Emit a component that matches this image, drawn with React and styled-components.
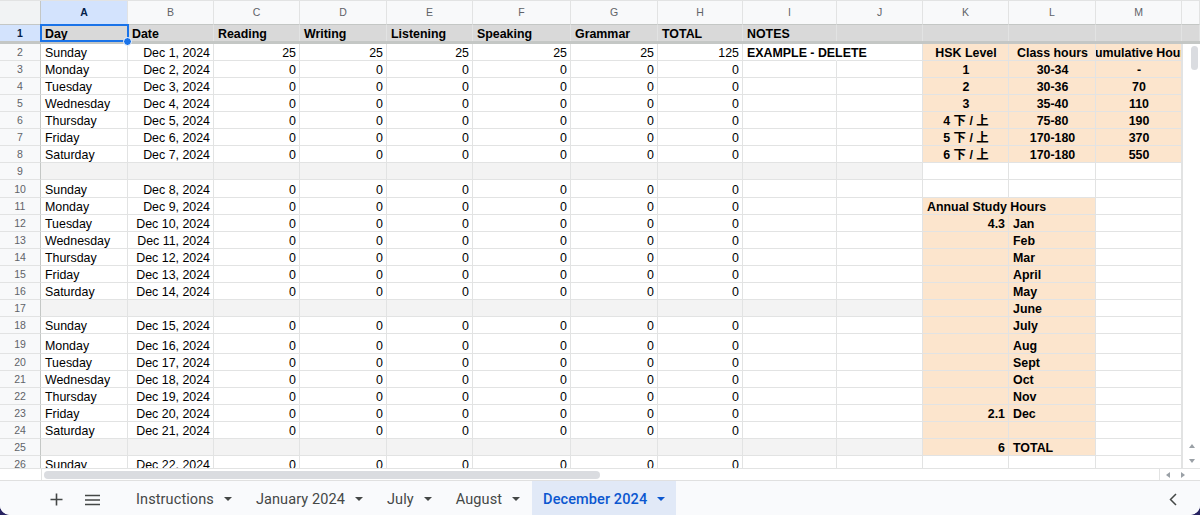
import React from 'react';
import styled, { createGlobalStyle } from 'styled-components';

const COLS = [41, 87, 86, 86, 87, 86, 98, 87, 85, 94, 86, 86, 87, 86];
const LETTERS = 'ABCDEFGHIJKLM'.split('');
const GRID = COLS.map((w) => w + 'px').join(' ');
const LINE = '#e2e3e3';
const PEACH = '#fce5cd';
const SEP = '#f3f3f3';
const HEAD_GRAY = '#d9d9d9';

const GlobalStyle = createGlobalStyle`
  html, body { margin: 0; padding: 0; background: #272361; }
  body { font-family: "Liberation Sans", Arial, "Noto Sans CJK SC", sans-serif; }
  * { box-sizing: border-box; }
`;

const Window = styled.div`
  width: 1200px;
  height: 515px;
  background: #fff;
  border-radius: 0 0 10px 10px;
  overflow: hidden;
  display: flex;
  flex-direction: column;
`;

const HeaderRow = styled.div`
  display: grid;
  grid-template-columns: ${GRID} 18px;
  height: 25px;
  border-top: 1px solid ${LINE};
`;

const Corner = styled.div`
  background: #f1f3f4;
  border-right: 1px solid #c4c7c5;
  border-bottom: 1px solid #c4c7c5;
`;

const ColHead = styled.div`
  display: flex;
  align-items: center;
  justify-content: center;
  padding-bottom: 1px;
  font-size: 10.5px;
  color: ${(p) => (p.$active ? '#041e49' : '#5f6368')};
  font-weight: ${(p) => (p.$active ? 700 : 400)};
  background: ${(p) => (p.$active ? '#d3e3fd' : '#f8f9fa')};
  border-right: 1px solid ${LINE};
  border-bottom: 1px solid #c4c7c5;
`;

const FrozenBlock = styled.div`
  position: relative;
`;

const Row = styled.div`
  display: grid;
  grid-template-columns: ${(p) => (p.$wide ? GRID + ' 18px' : GRID)};
  height: ${(p) => p.$h}px;
  flex-shrink: 0;
`;

const RowNum = styled.div`
  display: flex;
  align-items: center;
  justify-content: center;
  font-size: 10.5px;
  color: ${(p) => (p.$active ? '#041e49' : '#5f6368')};
  font-weight: ${(p) => (p.$active ? 700 : 400)};
  background: ${(p) => (p.$active ? '#d3e3fd' : '#f8f9fa')};
  border-right: 1px solid #c4c7c5;
  border-bottom: ${(p) => (p.$noBottom ? 'none' : `1px solid ${LINE}`)};
`;

const Cell = styled.div`
  display: flex;
  align-items: flex-end;
  justify-content: ${(p) =>
    p.$align === 'right' ? 'flex-end' : p.$align === 'center' ? 'center' : 'flex-start'};
  padding: 0 3px 0 4px;
  background: ${(p) => p.$bg || '#fff'};
  border-right: 1px solid ${(p) => (p.$noRight ? 'transparent' : LINE)};
  border-bottom: ${(p) => (p.$noBottom ? 'none' : `1px solid ${LINE}`)};
  font-size: 12.4px;
  line-height: 13px;
  color: #000;
  font-weight: ${(p) => (p.$bold ? 700 : 400)};
  white-space: nowrap;
  overflow: ${(p) => (p.$spill ? 'visible' : 'hidden')};
  position: ${(p) => (p.$spill ? 'relative' : 'static')};
  z-index: ${(p) => (p.$spill ? 1 : 'auto')};
`;

const Freeze = styled.div`
  height: 3px;
  background: #c4c7c5;
`;

const Selection = styled.div`
  position: absolute;
  left: 40px;
  top: -1px;
  width: 89px;
  height: 18px;
  border: 2px solid #1a73e8;
  pointer-events: none;
  z-index: 3;
`;

const Handle = styled.div`
  position: absolute;
  left: 123px;
  top: 12px;
  width: 9px;
  height: 9px;
  border-radius: 50%;
  background: #1a73e8;
  border: 1px solid #fff;
  z-index: 4;
`;

const Body = styled.div`
  display: flex;
  height: 424px;
  flex-shrink: 0;
`;

const BodyGrid = styled.div`
  width: 1182px;
  height: 424px;
  overflow: hidden;
  display: flex;
  flex-direction: column;
`;

const VScroll = styled.div`
  width: 18px;
  height: 424px;
  border-left: 1px solid ${LINE};
  display: flex;
  flex-direction: column;
  background: #fff;
`;

const VThumb = styled.div`
  margin: 2px 0 0 8px;
  width: 7px;
  height: 24px;
  border-radius: 4px;
  background: #dadce0;
`;

const Spacer = styled.div`
  flex: 1;
`;

const ArrowBox = styled.div`
  width: ${(p) => p.$w || 17}px;
  height: ${(p) => p.$h || 15}px;
  display: flex;
  align-items: center;
  justify-content: center;
  color: #9aa0a6;
`;

const ScrollRow = styled.div`
  height: 13px;
  display: flex;
  border-top: 1px solid ${LINE};
  border-bottom: 1px solid #e0e0e0;
  flex-shrink: 0;
  background: #fff;
`;

const ScrollStub = styled.div`
  width: 42px;
  border-right: 1px solid ${LINE};
`;

const HTrack = styled.div`
  flex: 1;
  display: flex;
  align-items: center;
`;

const HThumb = styled.div`
  margin-left: 2px;
  width: 556px;
  height: 8px;
  border-radius: 4px;
  background: #dadce0;
`;

const HArrows = styled.div`
  display: flex;
  margin-right: 10px;
  border-left: 1px solid ${LINE};
`;

const TabBar = styled.div`
  flex: 1;
  display: flex;
  align-items: stretch;
  background: #f9fafc;
  padding-left: 38px;
  font-family: Roboto, "Liberation Sans", Arial, sans-serif;
`;

const IconBtn = styled.div`
  width: 36px;
  display: flex;
  align-items: center;
  justify-content: center;
  padding-top: 3px;
  color: #444746;
`;

const Tabs = styled.div`
  display: flex;
  align-items: stretch;
  gap: 2px;
  margin-left: 15px;
`;

const Tab = styled.div`
  display: flex;
  align-items: center;
  gap: 10px;
  padding: 2px 11px 0;
  margin-left: ${(p) => (p.$active ? '-1px' : '0')};
  font-size: 14.5px;
  letter-spacing: 0.1px;
  color: ${(p) => (p.$active ? '#0b57d0' : '#444746')};
  background: ${(p) => (p.$active ? '#e1e9f7' : 'transparent')};
  font-weight: ${(p) => (p.$active ? 500 : 400)};
`;

const RightChevron = styled.div`
  margin-left: auto;
  margin-right: 2px;
  width: 50px;
  display: flex;
  align-items: center;
  justify-content: center;
  padding-top: 2px;
  color: #444746;
`;

const Caret = () => (
  <svg width="8" height="4" viewBox="0 0 8 4">
    <path d="M0 0h8L4 4z" fill="currentColor" />
  </svg>
);

const Tri = ({ dir }) => {
  const d = {
    up: 'M0 4L3 0L6 4z',
    down: 'M0 0h6L3 4z',
    left: 'M4 0v6L0 3z',
    right: 'M0 0v6L4 3z',
  }[dir];
  const w = dir === 'up' || dir === 'down' ? 6 : 4;
  const h = dir === 'up' || dir === 'down' ? 4 : 6;
  return (
    <svg width={w} height={h} viewBox={`0 0 ${w} ${h}`}>
      <path d={d} fill="currentColor" />
    </svg>
  );
};

const DAYS = ['Sunday', 'Monday', 'Tuesday', 'Wednesday', 'Thursday', 'Friday', 'Saturday'];
const HEADERS = ['Day', 'Date', 'Reading', 'Writing', 'Listening', 'Speaking', 'Grammar', 'TOTAL', 'NOTES', '', '', '', ''];
const HSK = [
  ['HSK Level', 'Class hours', 'Cumulative Hours'],
  ['1', '30-34', '-'],
  ['2', '30-36', '70'],
  ['3', '35-40', '110'],
  ['4 下 / 上', '75-80', '190'],
  ['5 下 / 上', '170-180', '370'],
  ['6 下 / 上', '170-180', '550'],
];
const MONTHS = ['Jan', 'Feb', 'Mar', 'April', 'May', 'June', 'July', 'Aug', 'Sept', 'Oct', 'Nov', 'Dec', '', 'TOTAL'];
const KVALS = { 12: '4.3', 23: '2.1', 25: '6' };

function buildRows() {
  const rows = [];
  for (let r = 2; r <= 26; r++) {
    const cells = Array.from({ length: 13 }, () => ({}));
    const sep = r === 9 || r === 17 || r === 25;
    if (sep) {
      for (let c = 0; c < 10; c++) cells[c].bg = SEP;
    } else {
      const d = r < 9 ? r - 1 : r < 17 ? r - 2 : r < 25 ? r - 3 : r - 4;
      cells[0] = { t: DAYS[(d - 1) % 7] };
      cells[1] = { t: `Dec ${d}, 2024`, align: 'right' };
      for (let c = 2; c <= 7; c++) {
        cells[c] = { t: r === 2 ? (c === 7 ? '125' : '25') : '0', align: 'right' };
      }
      if (r === 2) cells[8] = { t: 'EXAMPLE - DELETE', bold: true, spill: true, noRight: true };
    }
    if (r >= 2 && r <= 8) {
      HSK[r - 2].forEach((t, i) => {
        cells[10 + i] = { t, bg: PEACH, bold: true, align: 'center' };
      });
    }
    if (r >= 11 && r <= 25) {
      if (r === 11) {
        cells[10] = { t: 'Annual Study Hours', bg: PEACH, bold: true, spill: true, noRight: true };
        cells[11] = { bg: PEACH };
      } else {
        cells[10] = { t: KVALS[r] || '', bg: PEACH, bold: true, align: 'right' };
        cells[11] = { t: MONTHS[r - 12], bg: PEACH, bold: true };
      }
    }
    const h = r === 10 ? 18 : r === 19 ? 20 : 17;
    rows.push({ r, h, cells });
  }
  return rows;
}

const ROWS = buildRows();

const renderCell = (c, i) => (
  <Cell
    key={i}
    $bg={c.bg}
    $align={c.align}
    $bold={c.bold}
    $spill={c.spill}
    $noRight={c.noRight}
  >
    {c.t}
  </Cell>
);

export default function App() {
  return (
    <>
      <GlobalStyle />
      <Window>
        <HeaderRow>
          <Corner />
          {LETTERS.map((l, i) => (
            <ColHead key={l} $active={i === 0}>
              {l}
            </ColHead>
          ))}
          <ColHead />
        </HeaderRow>

        <FrozenBlock>
          <Row $h={16} $wide>
            <RowNum $active $noBottom>1</RowNum>
            {HEADERS.map((t, i) => (
              <Cell key={i} $bg={HEAD_GRAY} $bold $noBottom>
                {t}
              </Cell>
            ))}
            <Cell $bg={HEAD_GRAY} $noBottom />
          </Row>
          <Freeze />
          <Selection />
          <Handle />
        </FrozenBlock>

        <Body>
          <BodyGrid>
            {ROWS.map((row) => (
              <Row key={row.r} $h={row.h}>
                <RowNum>{row.r}</RowNum>
                {row.cells.map(renderCell)}
              </Row>
            ))}
          </BodyGrid>
          <VScroll>
            <VThumb />
            <Spacer />
            <ArrowBox>
              <Tri dir="up" />
            </ArrowBox>
            <ArrowBox>
              <Tri dir="down" />
            </ArrowBox>
          </VScroll>
        </Body>

        <ScrollRow>
          <ScrollStub />
          <HTrack>
            <HThumb />
          </HTrack>
          <HArrows>
            <ArrowBox $w={15} $h={11}>
              <Tri dir="left" />
            </ArrowBox>
            <ArrowBox $w={15} $h={11}>
              <Tri dir="right" />
            </ArrowBox>
          </HArrows>
        </ScrollRow>

        <TabBar>
          <IconBtn>
            <svg width="13" height="13" viewBox="0 0 13 13">
              <path d="M6.5 0.5v12M0.5 6.5h12" stroke="currentColor" strokeWidth="1.6" />
            </svg>
          </IconBtn>
          <IconBtn>
            <svg width="15" height="12" viewBox="0 0 15 12">
              <path d="M0 1.5h15M0 6h15M0 10.5h15" stroke="currentColor" strokeWidth="1.5" />
            </svg>
          </IconBtn>
          <Tabs>
            {['Instructions', 'January 2024', 'July', 'August', 'December 2024'].map((t) => (
              <Tab key={t} $active={t === 'December 2024'}>
                {t}
                <Caret />
              </Tab>
            ))}
          </Tabs>
          <RightChevron>
            <svg width="8" height="13" viewBox="0 0 8 13">
              <path d="M7 1L1.5 6.5L7 12" fill="none" stroke="currentColor" strokeWidth="1.5" />
            </svg>
          </RightChevron>
        </TabBar>
      </Window>
    </>
  );
}
